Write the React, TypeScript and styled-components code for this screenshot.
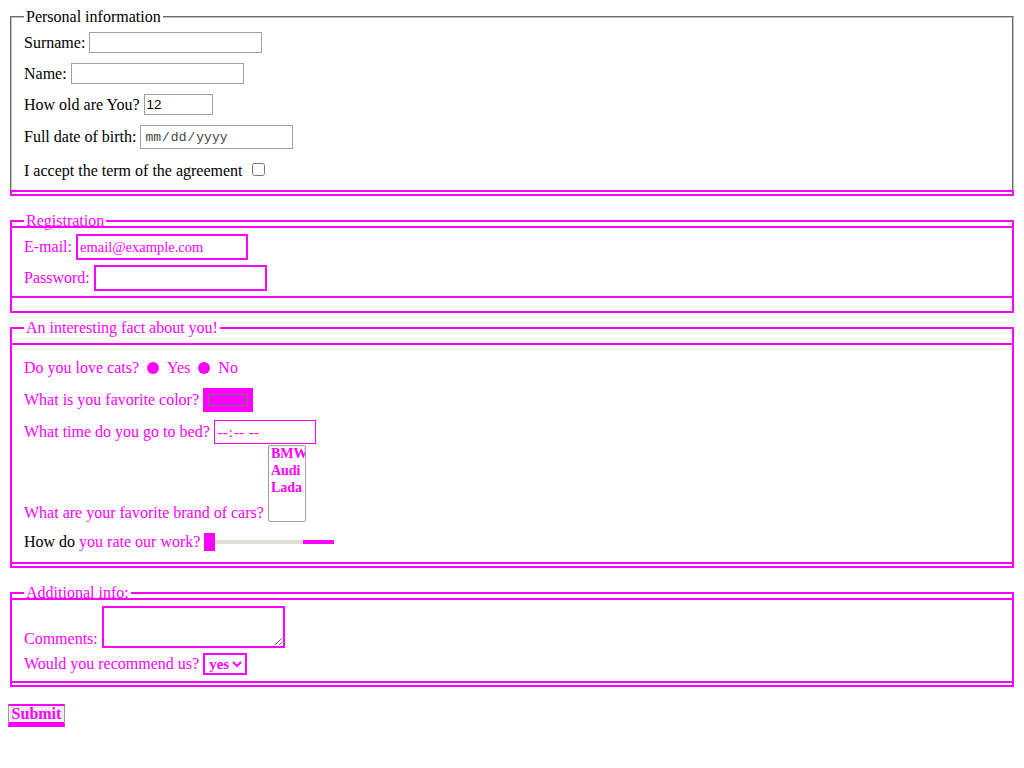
import React from 'react';
import styled, { createGlobalStyle } from 'styled-components';

const pink = '#ff00ff';

const GlobalStyle = createGlobalStyle`
    body {
        margin: 8px;
        background: #fff;
        color: #000;
        font-family: "Liberation Serif", "Times New Roman", serif;
        font-size: 16px;
    }
    * { box-sizing: border-box; }
`;

const Form = styled.form`
    display: flex;
    flex-direction: column;
    align-items: stretch;
`;

const Fieldset = styled.fieldset<{ $marked?: boolean; $top?: number; $bottom?: number }>`
    margin: ${p => p.$top ?? 0}px 2px 0;
    padding: 0 12px ${p => p.$bottom ?? 0}px;
    min-width: 0;
    border: ${p => (p.$marked ? `2px solid ${pink}` : '2px groove rgb(192, 192, 192)')};
    ${p => (p.$marked ? '' : 'border-bottom: none;')}
    color: ${p => (p.$marked ? pink : '#000')};
`;

const Legend = styled.legend`
    padding: 0 2px;
    line-height: 18px;
`;

const Divider = styled.div<{ $top: number }>`
    height: 2px;
    margin: ${p => p.$top}px -12px 0;
    background: ${pink};
`;

const Bar = styled.div`
    height: 6px;
    margin: 0 2px;
    border: 2px solid ${pink};
`;

const Row = styled.div<{ $top: number; $h: number; $end?: boolean }>`
    display: flex;
    align-items: ${p => (p.$end ? 'flex-end' : 'center')};
    gap: 4px;
    height: ${p => p.$h}px;
    margin-top: ${p => p.$top}px;
`;

const Label = styled.label<{ $color?: string }>`
    line-height: 18px;
    white-space: nowrap;
    color: ${p => p.$color ?? 'inherit'};
`;

const Text = styled.span<{ $color?: string }>`
    color: ${p => p.$color ?? 'inherit'};
`;

const TextInput = styled.input<{ $w: number; $h?: number; $marked?: boolean }>`
    width: ${p => p.$w}px;
    height: ${p => p.$h ?? 21}px;
    padding: 1px 2px;
    border: ${p => (p.$marked ? `2px solid ${pink}` : '1px solid #a0a0a0')};
    background: #fff;
    font-family: "Liberation Sans", Arial, sans-serif;
    font-size: 13.33px;
    color: ${p => (p.$marked ? pink : '#000')};

    &::placeholder {
        color: ${pink};
        font-family: "Liberation Serif", serif;
        font-size: 14.5px;
    }
`;

const DateInput = styled.input`
    width: 153px;
    height: 24px;
    padding: 1px 3px;
    border: 1px solid #a0a0a0;
    font-family: "Liberation Mono", "Courier New", monospace;
    font-size: 13px;
    color: #444;

    &::-webkit-calendar-picker-indicator {
        display: none;
    }
`;

const Check = styled.input`
    width: 13px;
    height: 13px;
    margin: 0 0 4px 5px;
    accent-color: #bbb;
`;

const Dot = styled.input`
    appearance: none;
    width: 12px;
    height: 12px;
    margin: 0 4px;
    border-radius: 50%;
    background: ${pink};
`;

const ColorInput = styled.input`
    width: 50px;
    height: 24px;
    padding: 1px 2px;
    border: 1px solid ${pink};
    background: ${pink};
`;

const TimeInput = styled.input`
    width: 102px;
    height: 24px;
    padding: 1px 2px;
    border: 1px solid ${pink};
    background: #fff;
    color: ${pink};
    font-family: "Liberation Serif", serif;
    font-size: 15px;

    &::-webkit-calendar-picker-indicator {
        display: none;
    }
`;

const MultiSelect = styled.select`
    width: 38px;
    height: 77px;
    padding: 0;
    border: 1px solid #a0a0a0;
    color: ${pink};
    font-family: "Liberation Serif", serif;
    font-size: 14px;
    overflow: hidden;
`;

const CarOption = styled.option`
    font-weight: bold;
    color: ${pink};
`;

const Range = styled.input`
    appearance: none;
    width: 130px;
    height: 18px;
    margin: 0;
    background: transparent;

    &::-webkit-slider-runnable-track {
        height: 4px;
        background: linear-gradient(to right, #e0dcd8 0, #e0dcd8 76%, ${pink} 76%);
    }

    &::-webkit-slider-thumb {
        appearance: none;
        width: 11px;
        height: 18px;
        margin-top: -7px;
        background: ${pink};
    }
`;

const TextArea = styled.textarea`
    width: 183px;
    height: 42px;
    border: 2px solid ${pink};
    resize: both;
`;

const SmallSelect = styled.select`
    width: 44px;
    height: 22px;
    border: 2px solid ${pink};
    background: #fff;
    color: ${pink};
    font-family: "Liberation Serif", serif;
    font-size: 15px;
    font-weight: bold;
`;

const Submit = styled.button`
    align-self: flex-start;
    width: 57px;
    height: 23px;
    margin-top: 17px;
    padding: 0;
    border: 1px solid #999;
    border-top: 2px solid ${pink};
    border-bottom: 5px solid ${pink};
    background: #efefef;
    color: ${pink};
    font-family: "Liberation Serif", serif;
    font-size: 16px;
    font-weight: bold;
    line-height: 14px;
`;

const App = () => (
    <>
        <GlobalStyle />
        <Form onSubmit={e => e.preventDefault()}>
            <Fieldset $bottom={9}>
                <Legend>Personal information</Legend>
                <Row $top={6} $h={21}>
                    <Label htmlFor="surname">Surname:</Label>
                    <TextInput id="surname" $w={173} />
                </Row>
                <Row $top={10} $h={21}>
                    <Label htmlFor="name">Name:</Label>
                    <TextInput id="name" $w={173} />
                </Row>
                <Row $top={10} $h={21}>
                    <Label htmlFor="age">How old are You?</Label>
                    <TextInput id="age" type="number" defaultValue={12} $w={69} />
                </Row>
                <Row $top={10} $h={24}>
                    <Label htmlFor="birth">Full date of birth:</Label>
                    <DateInput id="birth" type="date" />
                </Row>
                <Row $top={12} $h={20}>
                    <Label htmlFor="agree">I accept the term of the agreement</Label>
                    <Check id="agree" type="checkbox" />
                </Row>
            </Fieldset>
            <Bar />

            <Fieldset $marked $top={16} $bottom={13}>
                <Legend>Registration</Legend>
                <Divider $top={-4} />
                <Row $top={6} $h={26}>
                    <Label htmlFor="email">E-mail:</Label>
                    <TextInput id="email" type="email" placeholder="email@example.com" $w={172} $h={26} $marked />
                </Row>
                <Row $top={5} $h={26}>
                    <Label htmlFor="password">Password:</Label>
                    <TextInput id="password" type="password" $w={173} $h={26} $marked />
                </Row>
                <Divider $top={5} />
            </Fieldset>

            <Fieldset $marked $top={6} $bottom={2}>
                <Legend>An interesting fact about you!</Legend>
                <Divider $top={6} />
                <Row $top={13} $h={20}>
                    <Label>Do you love cats?</Label>
                    <Dot type="radio" name="cats" value="yes" />
                    <Text>Yes</Text>
                    <Dot type="radio" name="cats" value="no" />
                    <Text>No</Text>
                </Row>
                <Row $top={10} $h={24}>
                    <Label htmlFor="color">What is you favorite color?</Label>
                    <ColorInput id="color" type="color" defaultValue="#ff00ff" />
                </Row>
                <Row $top={8} $h={24}>
                    <Label htmlFor="bed">What time do you go to bed?</Label>
                    <TimeInput id="bed" type="time" />
                </Row>
                <Row $top={1} $h={77} $end>
                    <Label htmlFor="cars">What are your favorite brand of cars?</Label>
                    <MultiSelect id="cars" multiple size={4}>
                        <CarOption>BMW</CarOption>
                        <CarOption>Audi</CarOption>
                        <CarOption>Lada</CarOption>
                    </MultiSelect>
                </Row>
                <Row $top={10} $h={20}>
                    <Label htmlFor="rate">
                        <Text $color="#000">How do </Text>you rate our work?
                    </Label>
                    <Range id="rate" type="range" min={0} max={10} defaultValue={0} />
                </Row>
                <Divider $top={10} />
            </Fieldset>

            <Fieldset $marked $top={16} $bottom={2}>
                <Legend>Additional info:</Legend>
                <Divider $top={-4} />
                <Row $top={6} $h={42} $end>
                    <Label htmlFor="comments">Comments:</Label>
                    <TextArea id="comments" />
                </Row>
                <Row $top={5} $h={22}>
                    <Label htmlFor="recommend">Would you recommend us?</Label>
                    <SmallSelect id="recommend">
                        <option>yes</option>
                        <option>no</option>
                    </SmallSelect>
                </Row>
                <Divider $top={6} />
            </Fieldset>

            <Submit type="submit">Submit</Submit>
        </Form>
    </>
);

export default App;
